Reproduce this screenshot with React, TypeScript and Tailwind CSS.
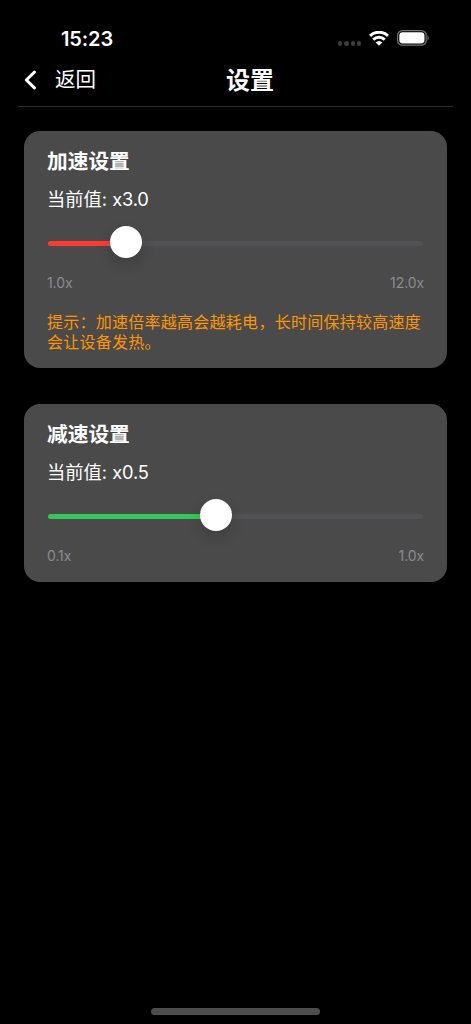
import { useState } from 'react'

interface SpeedCardProps {
  title: string
  min: number
  max: number
  initial: number
  // share of the track that sits left of the thumb's centre, in percent
  progress: number
  fillClass: string
  hint?: string
}

function StatusBar() {
  return (
    <div className="flex h-[54px] items-start justify-between pl-[61px] pr-[42px]">
      <span className="mt-[27px] text-[20px] font-semibold leading-[25px] tracking-[-0.1px]">15:23</span>
      <div className="mt-[30px] flex h-4 items-center">
        <div className="mt-[11px] mr-[8px] flex gap-[2px]">
          {[0, 1, 2, 3].map((i) => (
            <span key={i} className="size-[4.2px] rounded-full bg-[#3d3d3d]" />
          ))}
        </div>
        <svg width="20" height="15" viewBox="0 0 20 15" className="mr-[8px]" fill="none">
          <path d="M1 4.9a13 13 0 0 1 18 0" stroke="#fff" strokeWidth="3.1" />
          <path d="M4.2 8.6a8.4 8.4 0 0 1 11.6 0" stroke="#fff" strokeWidth="2.9" />
          <path d="M10 14.8 6.7 11.5a4.8 4.8 0 0 1 6.6 0z" fill="#fff" />
        </svg>
        <svg width="32" height="16" viewBox="0 0 32 16" fill="none">
          <rect x="0.6" y="0.6" width="28.6" height="14.6" rx="4.8" stroke="#757575" strokeWidth="1.2" />
          <rect x="2.3" y="2.3" width="25.2" height="11.2" rx="3.4" fill="#fff" />
          <path d="M30.5 5.6c1.6.7 1.6 4 0 4.7z" fill="#757575" />
        </svg>
      </div>
    </div>
  )
}

function Header() {
  return (
    <header className="mx-[18px] flex h-[53px] items-center border-b border-[#2c2c2c] pl-[6px]">
      <button type="button" className="flex items-center gap-[18px] text-[20.5px] leading-[28px]">
        <svg width="13" height="20" viewBox="0 0 13 20" fill="none" className="mt-[-1px]">
          <path d="M10.4 2.1 2.4 10l8 7.9" stroke="#fff" strokeWidth="3" strokeLinecap="round" strokeLinejoin="round" />
        </svg>
        <span className="mt-[-1px]">返回</span>
      </button>
      <h1 className="mt-[2px] ml-[130px] text-[24px] font-bold leading-[32px]">设置</h1>
    </header>
  )
}

function SpeedCard({ title, min, max, initial, progress, fillClass, hint }: SpeedCardProps) {
  const [value] = useState(initial)

  return (
    <section className="rounded-[16px] bg-[#4a4a4a] px-6 pt-[17px] pb-[16px]">
      <h2 className="-ml-px text-[20.7px] font-bold leading-[28px]">{title}</h2>
      <p className="-ml-px mt-[11px] text-[18.3px] leading-[24px]">
        当前值: <span className="tracking-[-0.2px]">x{value.toFixed(1)}</span>
      </p>
      <div className="relative mt-[15px] flex h-8 items-center">
        <div className="mt-[2px] h-[5px] w-full overflow-hidden rounded-full bg-[#525254]">
          <div className={`h-full ${fillClass}`} style={{ width: `${progress}%` }} />
        </div>
        <span
          className="absolute top-0 size-8 -translate-x-1/2 rounded-full bg-white shadow-[0_6px_14px_rgba(0,0,0,0.16)]"
          style={{ left: `${progress}%` }}
        />
      </div>
      <div className="-mx-px mt-[15px] flex justify-between text-[14px] leading-[20px] tracking-[-0.1px] text-[#8b8b90]">
        <span>{min.toFixed(1)}x</span>
        <span>{max.toFixed(1)}x</span>
      </div>
      {hint && (
        <p className="-mx-px mt-[19px] text-[16px] leading-[20px] tracking-[0.26px] text-[#ff9500]">{hint}</p>
      )}
    </section>
  )
}

export default function App() {
  return (
    <div className="flex h-screen flex-col overflow-hidden bg-black font-['Inter','Noto_Sans_CJK_SC',sans-serif] text-white">
      <StatusBar />
      <Header />
      <main className="flex flex-1 flex-col gap-[36px] px-6 pt-6">
        <SpeedCard
          title="加速设置"
          min={1}
          max={12}
          initial={3}
          progress={20.8}
          fillClass="bg-[#ff3b30]"
          hint="提示：加速倍率越高会越耗电，长时间保持较高速度会让设备发热。"
        />
        <SpeedCard
          title="减速设置"
          min={0.1}
          max={1}
          initial={0.5}
          progress={44.8}
          fillClass="bg-[#34c759]"
        />
      </main>
      <div className="mx-auto mb-[9px] h-[7px] w-[169px] rounded-full bg-[#4d4d4d]" />
    </div>
  )
}
